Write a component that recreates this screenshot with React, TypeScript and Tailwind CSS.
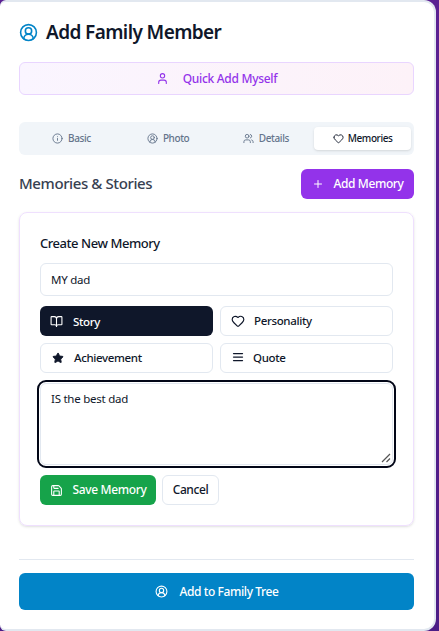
import { UserCircle2, CircleUserRound, User, Info, Users, Heart, Plus, BookOpen, Star, AlignJustify, Save } from "lucide-react";

export default function App() {
  return (
    <div className="w-[439px] h-[631px] overflow-hidden bg-gradient-to-b from-[#5b2192] to-[#4c1d86] font-['Noto_Sans',sans-serif]">
      <div className="w-[436px] h-[631px] bg-white border-t-2 border-b-2 border-r-2 border-[#e2e8f0] rounded-[12px] rounded-l-[6px] pl-[19px] pr-[20px] flex flex-col">
        <div className="flex items-center gap-[8px] mt-[18px] h-[24px]">
          <CircleUserRound size={19} strokeWidth={2} className="text-[#0284c7]" />
          <h1 className="text-[19px] font-semibold tracking-[-0.6px] text-[#0f172a] leading-[24px]">Add Family Member</h1>
        </div>

        <button className="mt-[18px] h-[33px] w-full rounded-[6px] border border-[#e9d5ff] bg-gradient-to-r from-[#faf5ff] to-[#fdf2f8] flex items-center justify-center gap-[14px] text-[12px] tracking-[-0.3px] font-medium text-[#9333ea]">
          <User size={13} strokeWidth={2} />
          <span>Quick Add Myself</span>
        </button>

        <div className="mt-[27px] h-[33px] rounded-[6px] bg-[#f1f5f9] p-[5px] pr-[3px] grid grid-cols-4 text-[10px] tracking-[-0.4px] font-medium text-[#64748b]">
          <div className="flex items-center justify-center gap-[5px] pr-[2px]"><Info size={11} />Basic</div>
          <div className="flex items-center justify-center gap-[5px] pr-[2px]"><UserCircle2 size={11} />Photo</div>
          <div className="flex items-center justify-center gap-[5px]"><Users size={11} />Details</div>
          <div className="flex items-center justify-center gap-[4px] bg-white rounded-[4px] shadow-sm text-[#0f172a]"><Heart size={11} />Memories</div>
        </div>

        <div className="mt-[14px] h-[30px] flex items-center justify-between">
          <h2 className="text-[15px] tracking-[-0.4px] font-medium text-[#374151] pb-[2px]">Memories &amp; Stories</h2>
          <button className="h-[30px] w-[113px] rounded-[6px] bg-[#9333ea] text-white flex items-center justify-center gap-[10px] text-[12px] tracking-[-0.4px] font-medium">
            <Plus size={12} />
            <span>Add Memory</span>
          </button>
        </div>

        <div className="mt-[13px] h-[314px] rounded-[8px] border border-[#efe0fe] px-[20px] pt-[20px] shadow-sm">
          <h3 className="text-[13px] tracking-[-0.45px] font-medium leading-[20px] text-[#0f172a]">Create New Memory</h3>
          <div className="mt-[10px] h-[33px] rounded-[6px] border border-[#e2e8f0] px-[10px] pt-[1px] flex items-center text-[11.5px] tracking-[-0.25px] text-[#0f172a]">MY dad</div>
          <div className="mt-[10px] grid grid-cols-2 gap-[7px] text-[11.5px] tracking-[-0.35px] text-[#0f172a]">
            <button className="h-[30px] rounded-[6px] bg-[#0f172a] text-white font-medium flex items-center gap-[10px] px-[10px]"><BookOpen size={13} /><span className="pt-[1px]">Story</span></button>
            <button className="h-[30px] rounded-[6px] border border-[#e2e8f0] font-medium flex items-center gap-[9px] px-[10px]"><Heart size={14} />Personality</button>
            <button className="h-[30px] rounded-[6px] border border-[#e2e8f0] font-medium flex items-center gap-[10px] px-[11px]"><Star size={12} fill="currentColor" />Achievement</button>
            <button className="h-[30px] rounded-[6px] border border-[#e2e8f0] font-medium flex items-center gap-[9px] px-[11px]"><AlignJustify size={12} strokeWidth={2.5} className="-mt-[2px]" />Quote</button>
          </div>
          <div className="relative mt-[10px] h-[82px] rounded-[6px] border border-[#e2e8f0] outline-2 outline-offset-1 outline-[#020617] px-[10px] py-[6px] text-[11.5px] tracking-[-0.25px] text-[#0f172a]">
            IS the best dad
            <svg className="absolute right-[1px] bottom-[1px]" width="10" height="10" viewBox="0 0 10 10" stroke="#555" strokeWidth="1.2">
              <path d="M1 9 9 1M5.5 9 9 5.5" />
            </svg>
          </div>
          <div className="mt-[10px] flex gap-[6px]">
            <button className="h-[30px] w-[116px] rounded-[6px] bg-[#16a34a] text-white text-[12px] tracking-[-0.35px] font-medium flex items-center justify-center gap-[10px]"><Save size={13} />Save Memory</button>
            <button className="h-[30px] w-[57px] rounded-[6px] border border-[#e2e8f0] text-[12px] tracking-[-0.4px] font-medium text-[#0f172a]">Cancel</button>
          </div>
        </div>

        <div className="mt-[33px] border-t border-[#e2e8f0]" />
        <button className="mt-[13px] h-[37px] w-full rounded-[6px] bg-[#0284c7] text-white flex items-center justify-center gap-[12px] text-[12px] tracking-[-0.4px] font-medium">
          <CircleUserRound size={13} />
          <span>Add to Family Tree</span>
        </button>
      </div>
    </div>
  );
}
